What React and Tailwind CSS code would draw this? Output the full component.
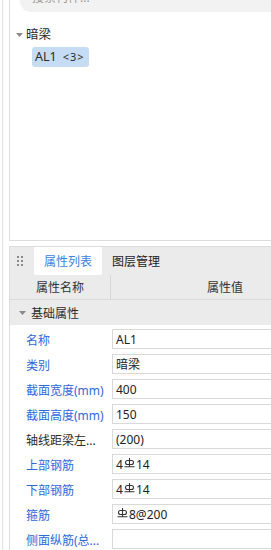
import React from "react";

const font = {
  fontFamily: '"Noto Sans", "Noto Sans CJK SC", sans-serif',
};

// HRB400 rebar symbol (no unicode glyph for it)
function Rebar() {
  return (
    <svg width="11" height="12" viewBox="0 0 11 12" className="inline-block mx-[1px] -mt-[3px]">
      <rect x="1.5" y="3.5" width="8" height="4" rx="2" fill="none" stroke="#333" strokeWidth="1.1" />
      <path d="M5.5 1 V9.5 M0.5 9.8 H10.5" stroke="#333" strokeWidth="1.1" fill="none" />
    </svg>
  );
}

function Caret({ className = "" }) {
  return (
    <svg width="7" height="4" viewBox="0 0 7 4" className={className}>
      <path d="M0 0 H7 L3.5 4 Z" fill="#8a8a8a" />
    </svg>
  );
}

const rows = [
  { name: "名称", value: "AL1", blue: true },
  { name: "类别", value: "暗梁", blue: true },
  { name: "截面宽度(mm)", value: "400", blue: true },
  { name: "截面高度(mm)", value: "150", blue: true },
  { name: "轴线距梁左...", value: "(200)", blue: false },
  { name: "上部钢筋", value: ["4", "R", "14"], blue: true },
  { name: "下部钢筋", value: ["4", "R", "14"], blue: true },
  { name: "箍筋", value: ["R", "8@200"], blue: true },
  { name: "侧面纵筋(总...", value: "", blue: true },
];

function Value({ v }) {
  if (Array.isArray(v)) {
    return v.map((p, i) => (p === "R" ? <Rebar key={i} /> : <span key={i}>{p}</span>));
  }
  return v;
}

export default function App() {
  return (
    <div className="w-[271px] h-[550px] overflow-hidden bg-white flex text-[12px] text-[#2b2b2b]" style={font}>
      <div className="w-[2px] shrink-0" />
      <div className="flex-1 border-l border-[#e2e2e2] pl-[6px] flex flex-col">
        {/* top panel: component tree */}
        <div className="h-[241px] shrink-0 border-l border-b border-[#dcdcdc] flex flex-col">
          <div className="ml-[10px] h-[12px] bg-[#f2f2f2] rounded-bl-[11px] overflow-hidden pl-[12px]">
            <div className="-mt-[10px] leading-[16px] text-[#9a9a9a]">搜索构件...</div>
          </div>
          <div className="mt-[13px] h-[20px] flex items-center pl-[6px]">
            <Caret className="mr-[3px]" />
            <span className="text-[12.5px]">暗梁</span>
          </div>
          <div className="mt-[2px] ml-[22px] h-[20px] w-[57px] rounded-[3px] bg-[#c6dcf4] flex items-center pl-[3px] pt-[1px] text-[12.5px]">
            <span>AL1</span>
            <span className="ml-[6px] text-[11px] tracking-[1px]">&lt;3&gt;</span>
          </div>
        </div>

        <div className="h-[5px] shrink-0" />

        {/* bottom panel: properties */}
        <div className="flex-1 border-l border-t border-[#dcdcdc] bg-[#ebebeb] overflow-hidden flex flex-col">
          <div className="h-[28px] shrink-0 flex items-stretch">
            <div className="pl-[7px] flex items-center">
              <div className="grid grid-cols-2 gap-x-[2px] gap-y-[2px]">
                {[0, 1, 2, 3, 4, 5].map((i) => (
                  <span key={i} className="w-[2px] h-[2px] bg-[#8a8a8a]" />
                ))}
              </div>
            </div>
            <div className="ml-[11px] w-[68px] bg-white flex items-center justify-center pt-[2px] text-[#3a83e6]">属性列表</div>
            <div className="ml-[10px] flex items-center pt-[2px] text-[#222]">图层管理</div>
          </div>

          <div className="h-[25px] shrink-0 flex border-b border-[#dadada] text-[#333]">
            <div className="w-[101px] shrink-0 border-r border-[#d6d6d6] flex items-center justify-center pt-[2px]">属性名称</div>
            <div className="w-[228px] shrink-0 flex items-center justify-center pt-[2px]">属性值</div>
          </div>

          <div className="h-[25px] shrink-0 flex items-center pl-[9px]">
            <Caret className="mr-[5px]" />
            <span className="pt-[2px]">基础属性</span>
          </div>

          <div className="flex-1 bg-white">
            {rows.map((r) => (
              <div key={r.name} className="h-[25px] flex">
                <div
                  className={
                    "w-[102px] shrink-0 pl-[16px] pt-[6px] flex items-center whitespace-nowrap " +
                    (r.blue ? "text-[#2f68dc]" : "text-[#2b2b2b]")
                  }
                >
                  {r.name}
                </div>
                <div className="mt-[4px] h-[20px] w-[228px] shrink-0 border border-[#d9d9d9] bg-white flex items-center pl-[3px] pt-[1px] text-[#222]">
                  <Value v={r.value} />
                </div>
              </div>
            ))}
          </div>
        </div>
      </div>
    </div>
  );
}
